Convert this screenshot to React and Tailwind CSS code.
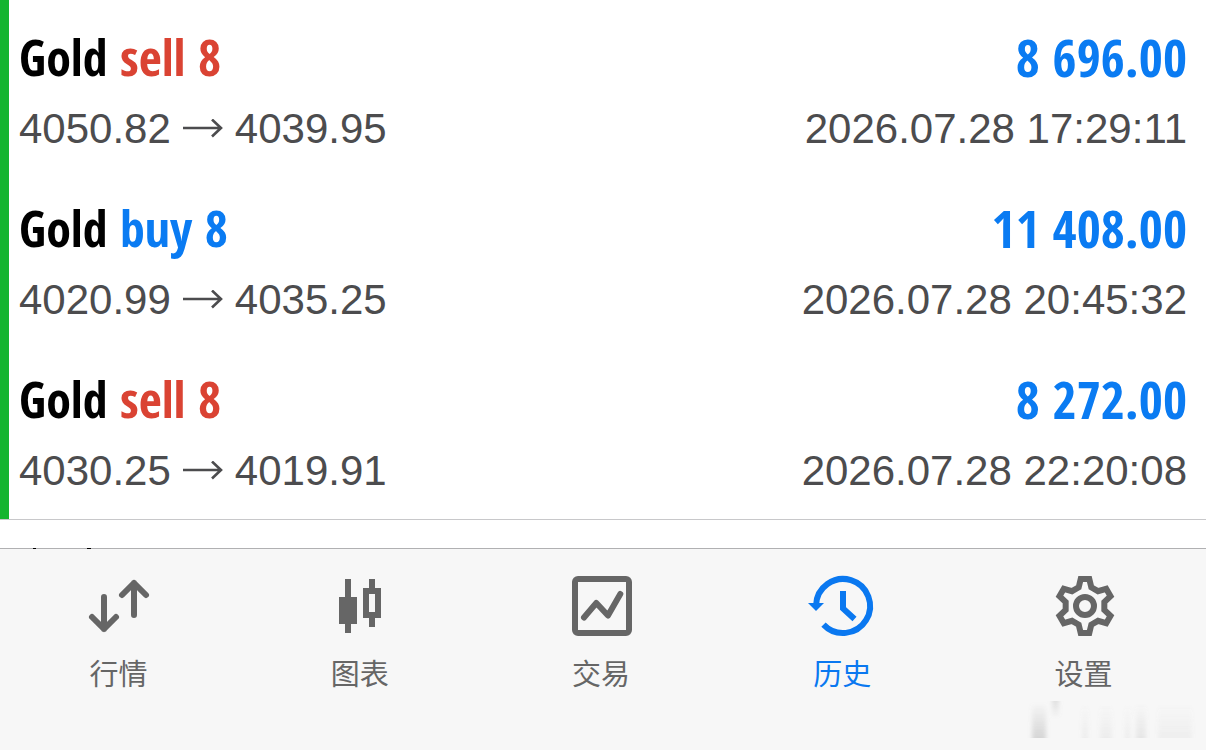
import clsx from 'clsx';

const deals = [
  { symbol: 'Gold', side: 'sell', volume: 8, open: '4050.82', close: '4039.95', profit: '8 696.00', time: '2026.07.28 17:29:11' },
  { symbol: 'Gold', side: 'buy', volume: 8, open: '4020.99', close: '4035.25', profit: '11 408.00', time: '2026.07.28 20:45:32' },
  { symbol: 'Gold', side: 'sell', volume: 8, open: '4030.25', close: '4019.91', profit: '8 272.00', time: '2026.07.28 22:20:08' },
];

const GEAR_TOOTH = [[-4.3, -27], [4.3, -27], [6.3, -18.7], [13, -14.8]];

const gearPoints = [0, 60, 120, 180, 240, 300]
  .flatMap((deg) => {
    const a = (deg * Math.PI) / 180;
    return GEAR_TOOTH.map(([x, y]) => [
      34 + x * Math.cos(a) - y * Math.sin(a),
      32 + x * Math.sin(a) + y * Math.cos(a),
    ].map((n) => n.toFixed(2)).join(','));
  })
  .join(' ');

function Icon({ children }) {
  return (
    <svg viewBox="0 0 64 64" className="size-16 overflow-visible" fill="none" stroke="currentColor" strokeWidth="6" aria-hidden="true">
      {children}
    </svg>
  );
}

function QuotesIcon() {
  return (
    <Icon>
      <path d="M17 23V55M5 43L17 55L29 43M47 41V9M35 21L47 9L59 21" strokeLinecap="round" strokeLinejoin="round" />
    </Icon>
  );
}

function ChartsIcon() {
  return (
    <Icon>
      <g fill="currentColor" stroke="none">
        <path d="M17 5H23V23H29V50H23V59H17V50H11V23H17Z" />
        <path fillRule="evenodd" d="M41 5H47V14H53V44H47V53H41V44H35V14H41ZM41 20V38H47V20Z" />
      </g>
    </Icon>
  );
}

function TradeIcon() {
  return (
    <Icon>
      <rect x="6" y="5" width="54" height="54" rx="3" />
      <path d="M15 43.5L27.3 29L39 41.5L51.3 20" strokeLinecap="round" strokeLinejoin="round" />
    </Icon>
  );
}

function HistoryIcon() {
  return (
    <Icon>
      <path d="M6.1 31A27 27 0 1 1 13.5 50.6" />
      <path d="M33 17V34.5L44.5 45" />
      <path d="M-2 29H14L6 37Z" fill="currentColor" stroke="none" />
    </Icon>
  );
}

function SettingsIcon() {
  return (
    <Icon>
      <polygon points={gearPoints} strokeLinejoin="miter" />
      <circle cx="34" cy="32" r="9" />
    </Icon>
  );
}

const tabs = [
  { id: 'quotes', label: '行情', icon: QuotesIcon },
  { id: 'charts', label: '图表', icon: ChartsIcon },
  { id: 'trade', label: '交易', icon: TradeIcon },
  { id: 'history', label: '历史', icon: HistoryIcon },
  { id: 'settings', label: '设置', icon: SettingsIcon },
];

function DealRow({ deal }) {
  return (
    <li className="flex flex-col gap-2 pt-5 pr-[19px] pb-4 pl-[10px]">
      <div className="flex items-center justify-between font-['Open_Sans_Condensed','Noto_Sans_CJK_SC',sans-serif] leading-[62px] font-bold">
        <h2 className="text-[50px] text-black">
          {deal.symbol}{' '}
          <span className={deal.side === 'sell' ? 'text-[#da4333]' : 'text-[#0a7bf2]'}>
            {deal.side} {deal.volume}
          </span>
        </h2>
        <span className="text-[52px] text-[#0a7bf2]">{deal.profit}</span>
      </div>
      <div className="flex items-center justify-between text-[42px] leading-[65px] text-[#4c4c4e]">
        <div className="flex items-center gap-3">
          <span>{deal.open}</span>
          <svg viewBox="0 0 40 20" className="h-5 w-10" fill="none" stroke="currentColor" strokeWidth="2.6" aria-label="to">
            <path d="M0 9H38M29 0.5L38 9L29 17.5" />
          </svg>
          <span>{deal.close}</span>
        </div>
        <time>{deal.time}</time>
      </div>
    </li>
  );
}

function Watermark() {
  return (
    <svg viewBox="0 0 180 44" className="pointer-events-none absolute right-2 bottom-2 h-11 w-[180px]" aria-hidden="true">
      <defs>
        <linearGradient id="fade" x1="0" y1="0" x2="0" y2="1">
          <stop offset="0" stopColor="#888" stopOpacity="0" />
          <stop offset="1" stopColor="#888" stopOpacity="0.3" />
        </linearGradient>
        <linearGradient id="fadeUp" x1="0" y1="1" x2="0" y2="0">
          <stop offset="0" stopColor="#888" stopOpacity="0" />
          <stop offset="1" stopColor="#888" stopOpacity="0.3" />
        </linearGradient>
        <filter id="soft">
          <feGaussianBlur stdDeviation="2 0" />
        </filter>
      </defs>
      <g fill="url(#fade)" filter="url(#soft)">
        <rect x="14" y="4" width="14" height="36" />
        <rect x="64" y="6" width="6" height="34" opacity="0.3" />
        <rect x="82" y="6" width="12" height="34" opacity="0.3" />
        <rect x="107" y="6" width="5" height="34" opacity="0.3" />
        <rect x="118" y="6" width="10" height="34" opacity="0.5" />
        <rect x="140" y="6" width="34" height="34" opacity="0.25" />
        <rect x="34" y="3" width="7" height="18" fill="url(#fadeUp)" opacity="0.7" />
      </g>
    </svg>
  );
}

function App() {
  return (
    <div className="flex min-h-screen flex-col bg-white font-['Liberation_Sans','Noto_Sans_CJK_SC',sans-serif]">
      <main className="pb-7">
        <div className="border-b border-[#c8c8ca]">
          <ul className="border-l-[9px] border-[#14b52f] pt-[6px]">
            {deals.map((deal) => (
              <DealRow key={deal.time} deal={deal} />
            ))}
          </ul>
        </div>
      </main>

      <nav className="relative grow border-t border-[#b0b0b2] bg-[#f7f7f7]">
        {/* tops of the next row showing at the bar's edge */}
        <div className="absolute -top-px left-[33px] flex gap-[51px]" aria-hidden="true">
          <span className="h-px w-[3px] bg-black" />
          <span className="h-px w-1 bg-black" />
        </div>
        <div className="grid grid-cols-5 pt-[25px]">
          {tabs.map(({ id, label, icon: TabIcon }) => (
            <a
              key={id}
              href={`#${id}`}
              aria-current={id === 'history' ? 'page' : undefined}
              className={clsx(
                'flex flex-col items-center gap-[17px] pr-1',
                id === 'history' ? 'text-[#0a78f0]' : 'text-[#666666]',
              )}
            >
              <TabIcon />
              <span className="text-[29px] leading-10">{label}</span>
            </a>
          ))}
        </div>
        <Watermark />
      </nav>
    </div>
  );
}

export default App;
